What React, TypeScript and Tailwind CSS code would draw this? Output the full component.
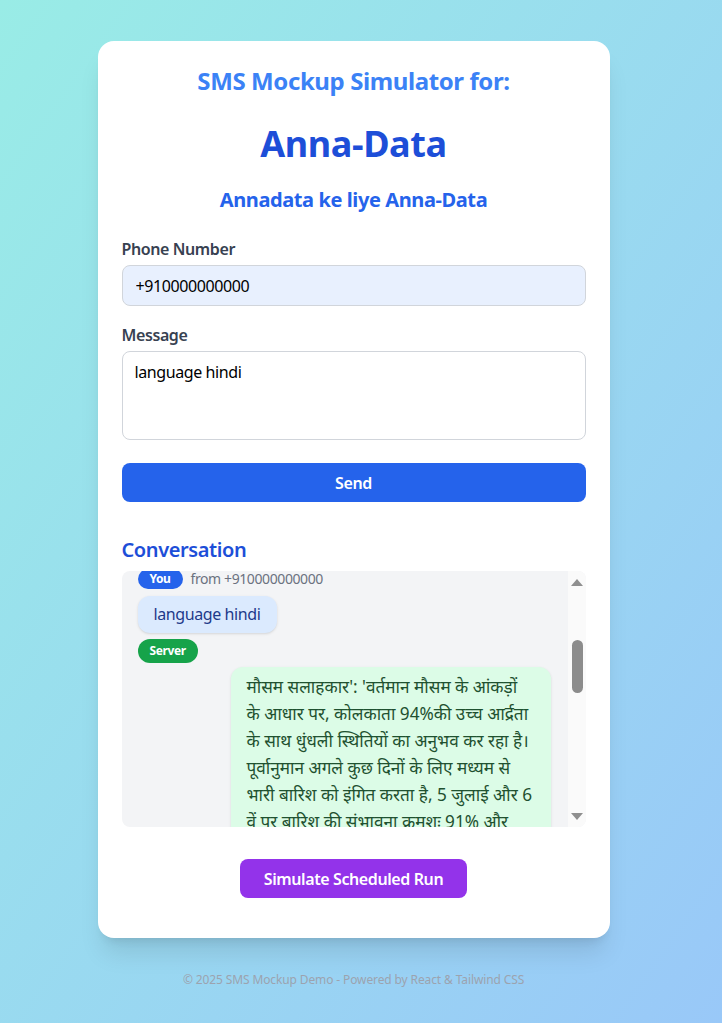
import React, { useEffect, useRef } from "react";

export default function App() {
  const boxRef = useRef<HTMLDivElement>(null);
  const youRef = useRef<HTMLDivElement>(null);

  useEffect(() => {
    if (boxRef.current && youRef.current) {
      boxRef.current.scrollTop = youRef.current.offsetTop + 2;
    }
  }, []);

  const font = { fontFamily: '"Segoe UI", "Noto Sans", "Noto Sans Devanagari", sans-serif' };

  return (
    <div
      className="min-h-screen w-full bg-gradient-to-br from-[#99ece6] to-[#99c8f8] flex flex-col items-center pt-[41px] pr-[15px] tracking-[-0.025em]"
      style={font}
    >
      <div className="w-[512px] bg-white rounded-2xl shadow-xl p-6 pb-10">
        <h2 className="text-2xl font-bold text-[#3b82f6] text-center">SMS Mockup Simulator for:</h2>
        <h1 className="text-4xl font-bold text-[#1d4ed8] text-center mt-[27px]">Anna-Data</h1>
        <h3 className="text-xl font-bold text-[#2563eb] text-center mt-[22px]">Annadata ke liye Anna-Data</h3>

        <div className="mt-[23px]">
          <label className="block text-base font-semibold text-[#374151] mb-1">Phone Number</label>
          <input
            defaultValue="+910000000000"
            className="w-full h-[41px] border border-[#d1d5db] rounded-lg px-[13px] bg-[#e8f0fe] text-base text-black outline-none tracking-[-0.025em]"
          />
        </div>

        <div className="mt-[17px]">
          <label className="block text-base font-semibold text-[#374151] mb-1">Message</label>
          <textarea
            defaultValue="language hindi"
            spellCheck={false}
            className="w-full h-[89px] border border-[#d1d5db] rounded-lg px-3 py-2 text-base text-black outline-none resize-none block tracking-[-0.025em]"
          />
        </div>

        <button className="w-full h-[39px] mt-[23px] bg-[#2563eb] text-white font-semibold rounded-lg tracking-[-0.025em]">Send</button>

        <h3 className="text-xl font-semibold text-[#1d4ed8] mt-[34px]">Conversation</h3>
        <div className="relative mt-[7px] h-64 bg-[#f3f4f6] rounded-lg overflow-hidden">
          <div
            ref={boxRef}
            className="h-full overflow-y-auto pl-4 pr-[35px] py-4 flex flex-col [scrollbar-width:none] [&::-webkit-scrollbar]:hidden"
          >
            <div className="flex items-center gap-2">
              <span className="bg-[#2563eb] text-white text-xs font-bold rounded-full px-3 py-0.5">You</span>
              <span className="text-sm text-[#6b7280]">from +910000000000</span>
            </div>
            <div className="self-start mt-[7px] bg-[#dbeafe] text-[#1e3a8a] rounded-xl px-4 py-[7px] leading-[23px] shadow-sm">hello</div>
            <div className="flex items-center mt-[6px]">
              <span className="bg-[#16a34a] text-white text-xs font-bold rounded-full px-3 py-1">Server</span>
            </div>
            <div className="self-end mt-[4px] max-w-xs bg-[#dcfce7] text-[#14532d] rounded-xl px-4 py-2 shadow-sm">
              Welcome to Anna-Data! Send "language hindi" to receive advisories in Hindi, or ask about weather, crops and market prices.
            </div>
            <div ref={youRef} className="flex items-center gap-2 mt-[8px]">
              <span className="bg-[#2563eb] text-white text-xs font-bold rounded-full px-3 py-0.5">You</span>
              <span className="text-sm text-[#6b7280]">from +910000000000</span>
            </div>
            <div className="self-start mt-[7px] bg-[#dbeafe] text-[#1e3a8a] rounded-xl px-4 py-[7px] leading-[23px] shadow-sm">language hindi</div>
            <div className="flex items-center mt-[6px]">
              <span className="bg-[#16a34a] text-white text-xs font-bold rounded-full px-3 py-1">Server</span>
            </div>
            <div className="self-end mt-[4px] w-[320px] bg-[#dcfce7] text-[#1f5130] rounded-xl px-4 py-[6px] shadow-sm text-[17.2px] leading-[27px] tracking-normal">
              मौसम सलाहकार': 'वर्तमान मौसम के आंकड़ों के आधार पर, कोलकाता 94%की उच्च आर्द्रता के साथ धुंधली स्थितियों का अनुभव कर रहा है। पूर्वानुमान अगले कुछ दिनों के लिए मध्यम से भारी बारिश को इंगित करता है, 5 जुलाई और 6 वें पर बारिश की संभावना क्रमशः 91% और 99% है। इन स्थितियों को देखते हुए, किसानों को जलभराव से बचने के लिए खेतों में उचित जल निकासी सुनिश्चित करनी चाहिए।
            </div>
          </div>
          {/* scrollbar overlay */}
          <div className="absolute right-0 top-0 bottom-0 w-[18px] bg-[#fafafa]">
            <svg className="absolute left-0 top-[5px]" width="18" height="12" viewBox="0 0 18 12">
              <polygon points="3,10 15,10 9,3" fill="#8f8f8f" />
            </svg>
            <div className="absolute left-[4px] top-[69px] w-[11px] h-[53px] rounded-full bg-[#8c8c8c]" />
            <svg className="absolute left-0 bottom-[4px]" width="18" height="12" viewBox="0 0 18 12">
              <polygon points="3,2 15,2 9,9" fill="#8f8f8f" />
            </svg>
          </div>
        </div>

        <div className="flex justify-center mt-8">
          <button className="h-[39px] px-6 bg-[#9333ea] text-white font-semibold rounded-lg tracking-[-0.025em]">Simulate Scheduled Run</button>
        </div>
      </div>
      <p className="text-xs text-[#9ca3af] mt-[34px] tracking-[-0.01em]">© 2025 SMS Mockup Demo - Powered by React &amp; Tailwind CSS</p>
    </div>
  );
}
